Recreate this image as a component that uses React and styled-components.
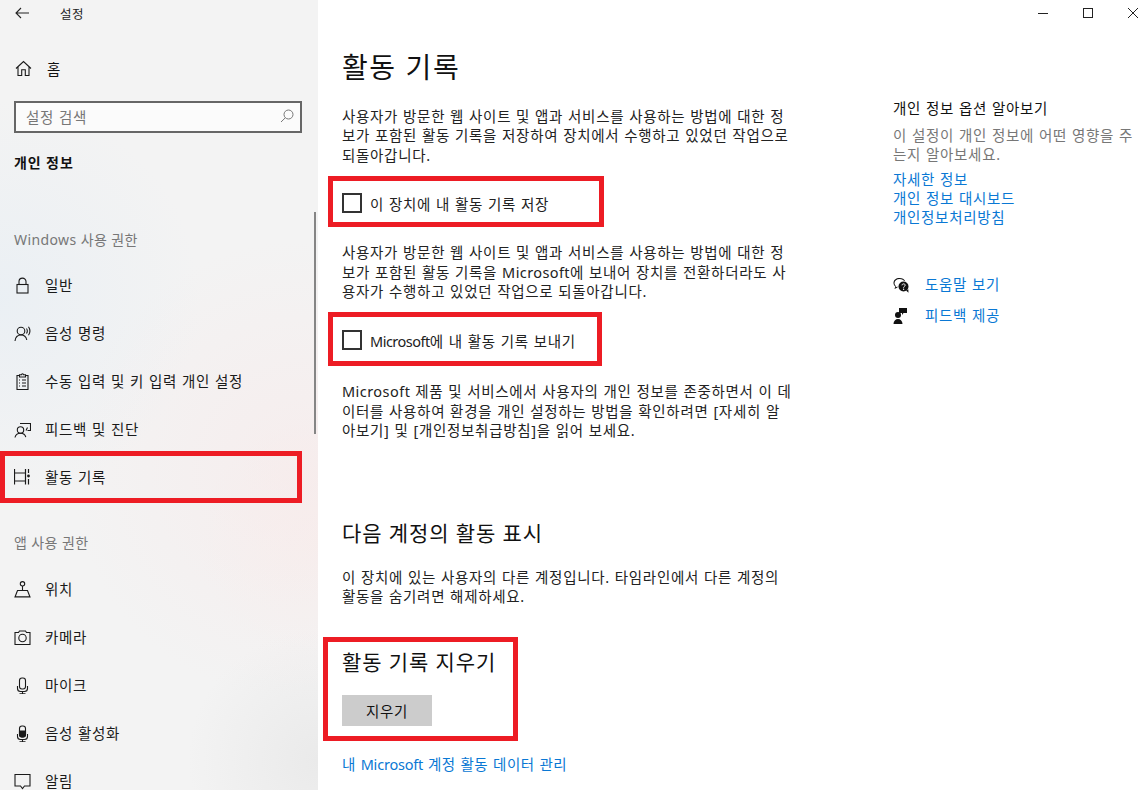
import styled, { createGlobalStyle, css } from "styled-components";

const GlobalStyle = createGlobalStyle`
  html, body {
    margin: 0;
    padding: 0;
    background: #fff;
  }
  body {
    font-family: "Noto Sans", "Noto Sans CJK KR", sans-serif;
    color: #111;
  }
`;

const bodyText = css`
  font-size: 14.5px;
  letter-spacing: 0.7px;
  word-spacing: 0.45px;
`;

const Page = styled.div`
  width: 1143px;
  height: 790px;
  display: flex;
  overflow: hidden;
`;

const Sidebar = styled.nav`
  position: relative;
  width: 318px;
  height: 790px;
  flex-shrink: 0;
  background:
    radial-gradient(circle at 0 300px, rgba(226, 236, 245, 0.5), transparent 200px),
    radial-gradient(circle at 300px 470px, rgba(250, 230, 230, 0.45), transparent 230px),
    radial-gradient(circle at 318px 540px, rgba(250, 235, 232, 0.35), transparent 120px),
    radial-gradient(circle at 318px 760px, rgba(225, 225, 225, 0.5), transparent 130px),
    #f3f3f3;
`;

const TitleBar = styled.div`
  height: 26px;
  display: flex;
  align-items: center;
  padding-left: 15px;
  gap: 30px;
  font-size: 12.5px;
  letter-spacing: 0.5px;
  color: #222;
`;

const HomeRow = styled.div`
  margin-top: 19px;
  height: 48px;
  box-sizing: border-box;
  padding: 0 0 2px 15px;
  display: flex;
  align-items: center;
  gap: 15px;
  ${bodyText}
`;

const SearchBox = styled.div`
  box-sizing: border-box;
  margin: 8px 0 0 14px;
  width: 288px;
  height: 32px;
  border: 2px solid #666;
  background: #fbfbfb;
  display: flex;
  align-items: center;
  justify-content: space-between;
  padding: 0 6px 2px 10px;
  ${bodyText}
  color: #777;
`;

const SectionTitle = styled.div`
  height: 20px;
  line-height: 20px;
  margin: ${(p) => p.$margin};
  padding-left: 14px;
  font-size: 14px;
  letter-spacing: ${(p) => (p.$bold ? "0.9px" : "0.4px")};
  font-weight: ${(p) => (p.$bold ? 700 : 400)};
  color: ${(p) => (p.$bold ? "#111" : "#777")};
`;

const NavRow = styled.div`
  position: relative;
  height: 48px;
  display: flex;
  align-items: center;
  padding-left: 14px;
  gap: 14px;
  ${bodyText}
  color: #1a1a1a;
`;

const NavLabel = styled.span`
  margin-top: -2px;
`;

const IconSlot = styled.span`
  width: 17px;
  height: 17px;
  display: flex;
  flex-shrink: 0;
`;

const Scrollbar = styled.div`
  position: absolute;
  left: 314px;
  top: 212px;
  width: 2px;
  height: 222px;
  background: #858585;
`;

const Marked = styled.div`
  position: relative;
  &::after {
    content: "";
    position: absolute;
    inset: ${(p) => p.$inset};
    border: 5px solid #ed1c24;
    pointer-events: none;
  }
`;

const Latin = styled.span`
  letter-spacing: ${(p) => p.$spacing};
`;

const Content = styled.div`
  flex: 1;
  min-width: 0;
  display: flex;
  flex-direction: column;
  background: #fff;
`;

const WindowBar = styled.div`
  height: 26px;
  display: flex;
  justify-content: flex-end;
  align-items: center;
  gap: 35px;
  padding-right: 5px;
`;

const Columns = styled.div`
  display: flex;
`;

const Main = styled.main`
  width: 575px;
  padding-left: 24px;
  flex-shrink: 0;
  box-sizing: border-box;
`;

const PageTitle = styled.h1`
  margin: 19px 0 0;
  height: 44px;
  line-height: 44px;
  font-size: 28px;
  font-weight: 400;
  letter-spacing: 1.6px;
  color: #111;
`;

const Para = styled.p`
  margin: ${(p) => p.$margin || "0"};
  ${bodyText}
  line-height: 19.4px;
  color: #222;
  white-space: nowrap;
`;

const CheckRow = styled.label`
  height: 20px;
  display: flex;
  align-items: center;
  gap: 8px;
  margin: ${(p) => p.$margin};
  ${bodyText}
  color: #222;
`;

const CheckBox = styled.span`
  box-sizing: border-box;
  width: 20px;
  height: 20px;
  border: 2px solid #333;
  flex-shrink: 0;
`;

const Heading = styled.h2`
  margin: ${(p) => p.$margin};
  height: 28px;
  line-height: 28px;
  font-size: 21px;
  font-weight: 400;
  letter-spacing: 0.9px;
  color: #111;
`;

const ClearButton = styled.button`
  display: block;
  width: 90px;
  height: 31px;
  margin-top: 19px;
  border: 0;
  padding: 0;
  background: #ccc;
  font-family: inherit;
  ${bodyText}
  color: #111;
`;

const LinkText = styled.a`
  display: block;
  height: 19px;
  line-height: 19px;
  margin: ${(p) => p.$margin || "0"};
  ${bodyText}
  color: #0a78d4;
`;

const ManageLink = styled(LinkText)`
  letter-spacing: 0.55px;
`;

const Aside = styled.aside`
  padding-top: 72px;
  width: 245px;
`;

const AsideTitle = styled.div`
  height: 20px;
  line-height: 20px;
  ${bodyText}
  color: #111;
`;

const AsideNote = styled.div`
  margin: 8px 0 5px;
  ${bodyText}
  line-height: 19.4px;
  color: #777;
  white-space: nowrap;
`;

const HelpRow = styled.div`
  height: 20px;
  margin-top: ${(p) => p.$top};
  display: flex;
  align-items: center;
  gap: 16px;
`;

const Line = ({ stroke = "#1a1a1a", children, vb = "0 0 17 17" }) => (
  <svg width="17" height="17" viewBox={vb} fill="none" stroke={stroke} strokeWidth="1.1">
    {children}
  </svg>
);

const icons = {
  home: <path d="M1 8.5 8.5 1.5 16 8.5M3 7v8.500h3.700V9.700h3.600v5.800H14V7" />,
  lock: (
    <>
      <rect x="3" y="7.500" width="11" height="8.500" />
      <path d="M5 7.500V4.600a3.500 3.500 0 0 1 7 0v2.900" />
    </>
  ),
  voice: (
    <>
      <circle cx="7" cy="6" r="3.800" />
      <path d="M1 16c.4-3.600 2.800-6 6-6s5.200 2.200 5.800 5M12.500 3.500c1 1.500 1 3.500 0 5M14.500 1.800c1.700 2.500 1.700 6 0 8.500" />
    </>
  ),
  clip: (
    <>
      <path d="M5.500 2.500H3v14h11v-14h-2.500" />
      <path d="M5.500 4V1.800h2a1 1 0 0 1 2 0h2V4zM5 7h1M8 7h4M5 10h1M8 10h4M5 13h1M8 13h4" />
    </>
  ),
  feedback: (
    <>
      <circle cx="6.500" cy="9" r="3.200" />
      <path d="M1 16.500c.4-2.500 2.500-4.300 5.500-4.300s4.800 1.600 5.300 4M6 2.500h10.500v7h-3M13.500 6.500l-1.500 3" />
    </>
  ),
  activity: (
    <>
      <path d="M.5 0v15.500M11.500 0v15.500M.5 4h11M.5 12h11" strokeWidth="1.200" />
      <path d="M14.500 0v4M14.500 10v5.500" strokeWidth="1.200" />
      <circle cx="14.500" cy="7" r="1.400" fill="#1a1a1a" stroke="none" />
    </>
  ),
  location: (
    <>
      <circle cx="8.500" cy="2.800" r="2.200" />
      <path d="M8.500 5v4.500M1 16l2.500-6.500h10L16 16zM1 15.800h15" />
    </>
  ),
  camera: (
    <>
      <path d="M1 3.500h3.500L5.500 2h6l1 1.500H16v12H1z" />
      <circle cx="8.500" cy="9" r="3.700" />
    </>
  ),
  mic: (
    <>
      <rect x="5.500" y="1" width="6" height="11" rx="2.500" />
      <path d="M3.500 9v2.500a3 3 0 0 0 3 3h4a3 3 0 0 0 3-3V9M8.500 14.500V17M5.500 16.800h6" />
    </>
  ),
  micOn: (
    <>
      <rect x="5.500" y="1" width="6" height="11" rx="2.500" />
      <path d="M5.500 6h6v3.500a2.500 2.500 0 0 1-2.500 2.500h-1a2.500 2.500 0 0 1-2.500-2.500z" fill="#1a1a1a" />
      <path d="M3.500 9v2.500a3 3 0 0 0 3 3h4a3 3 0 0 0 3-3V9M8.500 14.500V17M5.500 16.800h6" />
    </>
  ),
  bell: <path d="M1 1.500h15v11.500h-5.500l-2 2.500-2-2.500H1z" />,
};

const NavItem = ({ icon, label }) => (
  <NavRow>
    <IconSlot>
      <Line>{icons[icon]}</Line>
    </IconSlot>
    <NavLabel>{label}</NavLabel>
  </NavRow>
);

export default function App() {
  return (
    <>
      <GlobalStyle />
      <Page>
        <Sidebar>
          <TitleBar>
            <svg width="15" height="12" viewBox="0 0 15 12" fill="none" stroke="#222" strokeWidth="1.100">
              <path d="M14 6H1M6 1 1 6l5 5" />
            </svg>
            <span>설정</span>
          </TitleBar>
          <HomeRow>
            <IconSlot>
              <Line>{icons.home}</Line>
            </IconSlot>
            홈
          </HomeRow>
          <SearchBox>
            설정 검색
            <svg width="14" height="14" viewBox="0 0 14 14" fill="none" stroke="#777" strokeWidth="1">
              <circle cx="8.500" cy="5.500" r="4.500" />
              <path d="M5.300 8.800 1 13" />
            </svg>
          </SearchBox>
          <SectionTitle $bold $margin="20px 0 0">개인 정보</SectionTitle>
          <SectionTitle $margin="57px 0 11px">Windows 사용 권한</SectionTitle>
          <NavItem icon="lock" label="일반" />
          <NavItem icon="voice" label="음성 명령" />
          <NavItem icon="clip" label="수동 입력 및 키 입력 개인 설정" />
          <NavItem icon="feedback" label="피드백 및 진단" />
          <Marked $inset="-2px 16px -2px 0">
            <NavItem icon="activity" label="활동 기록" />
          </Marked>
          <SectionTitle $margin="32px 0 12px">앱 사용 권한</SectionTitle>
          <NavItem icon="location" label="위치" />
          <NavItem icon="camera" label="카메라" />
          <NavItem icon="mic" label="마이크" />
          <NavItem icon="micOn" label="음성 활성화" />
          <NavItem icon="bell" label="알림" />
          <Scrollbar />
        </Sidebar>

        <Content>
          <WindowBar>
            <svg width="10" height="10" viewBox="0 0 10 10" stroke="#222" fill="none">
              <path d="M0 5.500h10" />
            </svg>
            <svg width="10" height="10" viewBox="0 0 10 10" stroke="#222" fill="none">
              <rect x="0.500" y="0.500" width="9" height="9" />
            </svg>
            <svg width="10" height="10" viewBox="0 0 10 10" stroke="#222" fill="none">
              <path d="M0 0l10 10M10 0 0 10" />
            </svg>
          </WindowBar>
          <Columns>
            <Main>
              <PageTitle>활동 기록</PageTitle>
              <Para $margin="18px 0 0">
                사용자가 방문한 웹 사이트 및 앱과 서비스를 사용하는 방법에 대한 정<br />
                보가 포함된 활동 기록을 저장하여 장치에서 수행하고 있었던 작업으로<br />
                되돌아갑니다.
              </Para>
              <Marked $inset="-17px 289px -14px -14px">
                <CheckRow $margin="28px 0 0">
                  <CheckBox />이 장치에 내 활동 기록 저장
                </CheckRow>
              </Marked>
              <Para $margin="30px 0 0">
                사용자가 방문한 웹 사이트 및 앱과 서비스를 사용하는 방법에 대한 정<br />
                보가 포함된 활동 기록을 <Latin $spacing="0.4px">Microsoft</Latin>에 보내어 장치를 전환하더라도 사<br />
                용자가 수행하고 있었던 작업으로 되돌아갑니다.
              </Para>
              <Marked $inset="-18px 291px -16px -14px">
                <CheckRow $margin="29px 0 0">
                  <CheckBox />
                  <span>
                    <Latin $spacing="-0.5px">Microsoft</Latin>에 내 활동 기록 보내기
                  </span>
                </CheckRow>
              </Marked>
              <Para $margin="32px 0 0">
                <Latin $spacing="0.45px">Microsoft</Latin> 제품 및 서비스에서 사용자의 개인 정보를 존중하면서 이 데<br />
                이터를 사용하여 환경을 개인 설정하는 방법을 확인하려면 [자세히 알<br />
                아보기] 및 [개인정보취급방침]을 읽어 보세요.
              </Para>
              <Heading $margin="78px 0 0">다음 계정의 활동 표시</Heading>
              <Para $margin="21px 0 0">
                이 장치에 있는 사용자의 다른 계정입니다. 타임라인에서 다른 계정의<br />
                활동을 숨기려면 해제하세요.
              </Para>
              <Marked $inset="-11px 375px -15px -19px">
                <Heading $margin="42px 0 0">활동 기록 지우기</Heading>
                <ClearButton>지우기</ClearButton>
              </Marked>
              <ManageLink $margin="29px 0 0">
                내 <Latin $spacing="-0.2px">Microsoft</Latin> 계정 활동 데이터 관리
              </ManageLink>
            </Main>
            <Aside>
              <AsideTitle>개인 정보 옵션 알아보기</AsideTitle>
              <AsideNote>
                이 설정이 개인 정보에 어떤 영향을 주<br />
                는지 알아보세요.
              </AsideNote>
              <LinkText>자세한 정보</LinkText>
              <LinkText>개인 정보 대시보드</LinkText>
              <LinkText>개인정보처리방침</LinkText>
              <HelpRow $top="48px">
                <svg width="16" height="16" viewBox="0 0 16 16" fill="#111">
                  <path d="M6.500 1C3 1 .5 3 .5 6c0 1.500.7 2.700 1.800 3.500L1.500 12l3-1.500V9.500l-1.800.8.300-1.300C2 8.300 1.500 7.200 1.500 6c0-2.300 2.200-4 5-4s4 1 4.500 2h1C11.300 2.200 9.300 1 6.500 1z" />
                  <circle cx="10.500" cy="9.500" r="5" />
                  <path d="M13 13.500l2.500 2.300-.2-3.500z" />
                  <path d="M9 8.300c.1-1 .8-1.400 1.600-1.400 1 0 1.600.6 1.600 1.300 0 1.200-1.600 1.200-1.600 2.500" fill="none" stroke="#fff" strokeWidth="1" />
                  <circle cx="10.600" cy="12.300" r=".7" fill="#fff" />
                </svg>
                <LinkText>도움말 보기</LinkText>
              </HelpRow>
              <HelpRow $top="11px">
                <svg width="16" height="16" viewBox="0 0 16 16" fill="#111">
                  <circle cx="5" cy="7" r="3" />
                  <path d="M.5 16c0-3 2-5 4.500-5s4.500 2 4.500 5zM6 0h8v5H10.500L9 7V5H6z" />
                </svg>
                <LinkText>피드백 제공</LinkText>
              </HelpRow>
            </Aside>
          </Columns>
        </Content>
      </Page>
    </>
  );
}
